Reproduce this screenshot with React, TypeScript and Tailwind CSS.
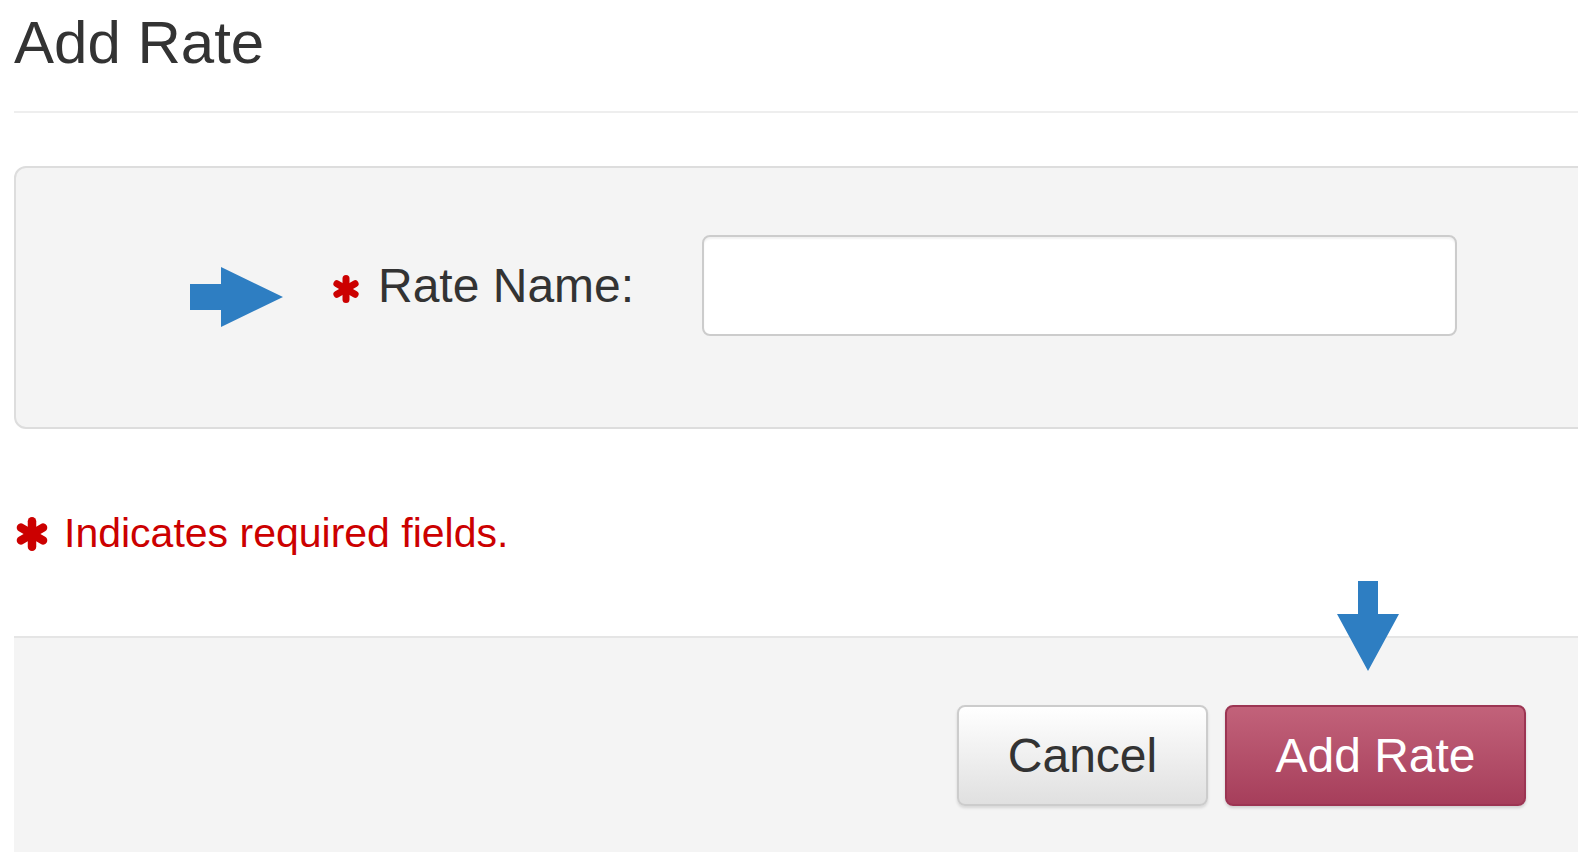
function Asterisk({ size }: { size: number }) {
  return (
    <svg width={size} height={size} viewBox="0 0 24 24" className="shrink-0">
      <g stroke="#cc0000" strokeWidth="6" strokeLinecap="round">
        <line x1="12" y1="3" x2="12" y2="21" />
        <line x1="4.2" y1="7.5" x2="19.8" y2="16.5" />
        <line x1="4.2" y1="16.5" x2="19.8" y2="7.5" />
      </g>
    </svg>
  );
}

export default function App() {
  return (
    <div
      className="h-[852px] w-full overflow-hidden bg-white"
      style={{ fontFamily: '"Liberation Sans", Arial, sans-serif' }}
    >
      <div className="ml-[14px] flex h-full w-[1600px] flex-col">
        {/* Titre */}
        <div className="h-[113px] border-b-2 border-[#eeeeee] pt-[13px]">
          <h1 className="text-[60px] leading-none text-[#333333]">Add Rate</h1>
        </div>

        {/* Panneau du formulaire */}
        <div className="mt-[53px] h-[263px] rounded-[12px] border-2 border-[#dddddd] bg-[#f4f4f4] pl-[174px] pt-[67px]">
          <div className="flex h-[101px] items-start">
            <svg width="93" height="60" viewBox="0 0 93 60" className="mt-[32px] shrink-0">
              <path d="M0 17 H31 V0 L93 30 L31 60 V43 H0 Z" fill="#2e7ec2" />
            </svg>
            <div className="ml-[49px] flex h-full w-[370px] shrink-0 items-center gap-[18px]">
              <div className="mt-[6px]">
                <Asterisk size={28} />
              </div>
              <span className="text-[48px] leading-none text-[#333333]">Rate Name:</span>
            </div>
            <input
              type="text"
              className="h-[101px] w-[755px] rounded-[8px] border-2 border-[#cccccc] bg-white px-4 text-[40px] shadow-[inset_0_2px_2px_rgba(0,0,0,0.06)] outline-none"
            />
          </div>
        </div>

        {/* Champs requis */}
        <div className="mt-[84px] flex h-[41px] items-center gap-[15px] pl-[1px]">
          <Asterisk size={34} />
          <span className="text-[41px] leading-none text-[#cc0000]">Indicates required fields.</span>
        </div>

        {/* Pied avec boutons */}
        <div className="mt-[82px] flex flex-1 justify-end gap-[17px] border-t-2 border-[#e5e5e5] bg-[#f4f4f4] pr-[88px] pt-[67px]">
          <button className="h-[101px] w-[251px] rounded-[8px] border-2 border-[#cccccc] bg-gradient-to-b from-white to-[#e0e0e0] text-[48px] leading-none text-[#333333] shadow-[0_2px_3px_rgba(0,0,0,0.12)]">
            Cancel
          </button>
          <div className="relative">
            <svg
              width="62"
              height="90"
              viewBox="0 0 62 90"
              className="absolute left-[112px] top-[-124px]"
            >
              <path d="M21 0 H41 V33 H62 L31 90 L0 33 H21 Z" fill="#2e7ec2" />
            </svg>
            <button className="h-[101px] w-[301px] rounded-[8px] border-2 border-[#9c3553] bg-gradient-to-b from-[#c2627a] to-[#a63e5b] text-[48px] leading-none text-white shadow-[0_2px_3px_rgba(0,0,0,0.15)]">
              Add Rate
            </button>
          </div>
        </div>
      </div>
    </div>
  );
}
